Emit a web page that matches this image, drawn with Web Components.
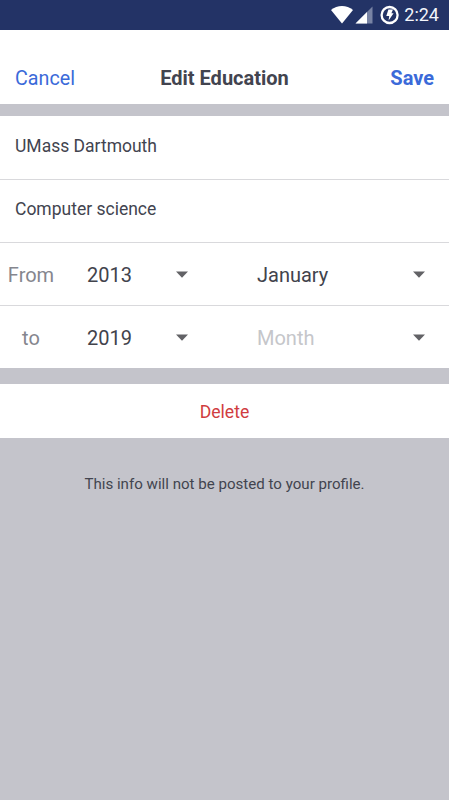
<!DOCTYPE html>
<html lang="en">
<head>
<meta charset="utf-8">
<title>Edit Education</title>
<style>
  body {
    margin: 0;
    background: #c4c4cb;
    font-family: Roboto, sans-serif;
    color: #42444f;
  }
</style>
</head>
<body>
<edit-education></edit-education>

<script>
/**
 * Create a template from a string of markup.
 */
const createTemplate = (html) => {
  const template = document.createElement('template')
  template.innerHTML = html
  return template
}

/**
 * Base class, attaches the template of the subclass.
 */
class BaseElement extends HTMLElement {
  constructor() {
    super()
    this.attachShadow({ mode: 'open' })
      .appendChild(this.constructor.template.content.cloneNode(true))
  }
}

// Android status bar.
customElements.define('status-bar', class extends BaseElement {
  static template = createTemplate(`
    <style>
      :host {
        display: flex;
        align-items: center;
        justify-content: flex-end;
        box-sizing: border-box;
        height: 30px;
        padding-right: 10px;
        background: #233366;
        color: #f4f6fb;
        font-size: 18px;
        line-height: 30px;
      }

      svg {
        display: block;
        margin-right: 5px;
      }
    </style>
    <svg width="68" height="30" viewBox="0 0 68 30">
      <!-- wifi -->
      <path fill="#fff" d="M0 10C6.3 4.8 15.7 4.8 22 10L11 23.5Z"/>
      <!-- signal -->
      <path fill="#7883a4" d="M41.5 6.5V23.5H24.5Z"/>
      <path fill="#fff" d="M36 12V23.5H24.5Z"/>
      <!-- battery saver -->
      <circle cx="58.6" cy="15" r="8" fill="none" stroke="#fff" stroke-width="2.3"/>
      <path fill="#fff" d="M57.4 9.6H62L60.4 13.3H62.6L57.6 20.4L58.2 15.9H55.3Z"/>
    </svg>
    <slot></slot>
  `)
})

// Top bar with an action on each side.
customElements.define('nav-header', class extends BaseElement {
  static template = createTemplate(`
    <style>
      :host {
        display: grid;
        grid-template-columns: 1fr auto 1fr;
        align-items: baseline;
        align-content: center;
        box-sizing: border-box;
        height: 74px;
        padding: 22px 15px 0;
        background: #fff;
        font-size: 19.7px;
        line-height: 24px;
      }

      h1 {
        margin: 0;
        font-size: 20px;
        font-weight: 700;
      }

      .left, .right {
        color: #3b6ad9;
      }

      .right {
        font-size: 20px;
        text-align: right;
        font-weight: 700;
      }
    </style>
    <div class="left"><slot name="left"></slot></div>
    <h1><slot></slot></h1>
    <div class="right"><slot name="right"></slot></div>
  `)
})

// White block that holds rows.
customElements.define('form-section', class extends BaseElement {
  static template = createTemplate(`
    <style>
      :host {
        display: block;
        background: #fff;
      }

      ::slotted(:not(:last-child)) {
        border-bottom: 1px solid #d9d9dc;
      }
    </style>
    <slot></slot>
  `)
})

customElements.define('text-row', class extends BaseElement {
  static template = createTemplate(`
    <style>
      :host {
        display: flex;
        align-items: center;
        height: 62px;
        padding: 0 15px;
        font-size: 17.5px;
      }

      :host(:first-child) {
        height: 63px;
      }

      span {
        padding-bottom: 4px;
      }
    </style>
    <span><slot></slot></span>
  `)
})

customElements.define('date-row', class extends BaseElement {
  static template = createTemplate(`
    <style>
      :host {
        display: grid;
        grid-template-columns: 62px 127px 1fr;
        column-gap: 25px;
        align-items: center;
        height: 62px;
        padding-right: 24px;
        font-size: 20px;
      }

      .label {
        padding-top: 2px;
        color: #85868e;
        text-align: center;
      }
    </style>
    <div class="label"><slot name="label"></slot></div>
    <slot></slot>
  `)
})

// Value with a dropdown arrow.
customElements.define('select-field', class extends BaseElement {
  static template = createTemplate(`
    <style>
      :host {
        display: flex;
        align-items: center;
        justify-content: space-between;
        color: #42434c;
      }

      :host([placeholder]) {
        color: #c5c6ca;
      }

      :host([year]) {
        width: 101px;
      }

      :host([month]) {
        margin-left: 18px;
      }

      span {
        padding-top: 2px;
      }
    </style>
    <span><slot></slot></span>
    <svg width="12" height="7" viewBox="0 0 12 7"><path fill="#626266" d="M0 .5H12L6 6.7Z"/></svg>
  `)
})

customElements.define('delete-button', class extends BaseElement {
  static template = createTemplate(`
    <style>
      :host {
        display: flex;
        align-items: center;
        justify-content: center;
        height: 54px;
        color: #d03c40;
        font-size: 17.6px;
      }

      span {
        padding-top: 2px;
      }
    </style>
    <span><slot></slot></span>
  `)
})

customElements.define('edit-education', class extends BaseElement {
  static template = createTemplate(`
    <style>
      :host {
        display: block;
      }

      nav-header {
        margin-bottom: 12px;
      }

      form-section + form-section {
        margin-top: 16px;
      }

      p {
        margin: 36px 0 0;
        font-size: 15.1px;
        line-height: 20px;
        text-align: center;
      }
    </style>
    <status-bar>2:24</status-bar>
    <nav-header>
      <span slot="left">Cancel</span>
      Edit Education
      <span slot="right">Save</span>
    </nav-header>
    <form-section>
      <text-row>UMass Dartmouth</text-row>
      <text-row>Computer science</text-row>
      <date-row>
        <span slot="label">From</span>
        <select-field year>2013</select-field>
        <select-field month>January</select-field>
      </date-row>
      <date-row>
        <span slot="label">to</span>
        <select-field year>2019</select-field>
        <select-field month placeholder>Month</select-field>
      </date-row>
    </form-section>
    <form-section>
      <delete-button>Delete</delete-button>
    </form-section>
    <p>This info will not be posted to your profile.</p>
  `)
})
</script>
</body>
</html>
